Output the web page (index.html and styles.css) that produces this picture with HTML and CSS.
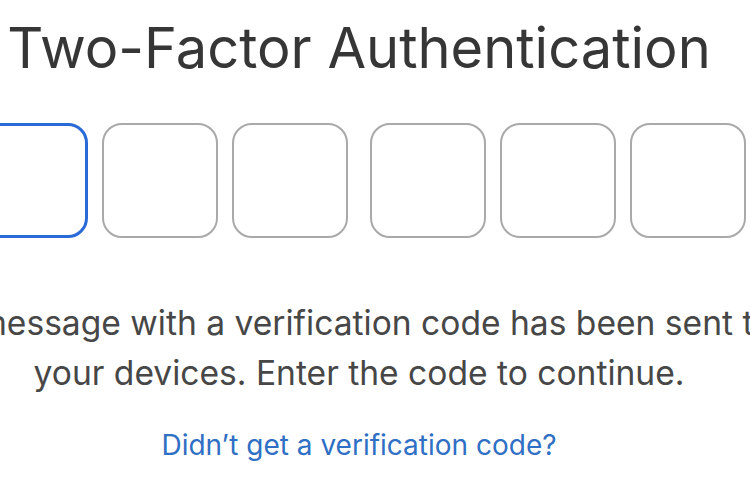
FILE: index.html
```html
<!DOCTYPE html>
<html lang="en">
<head>
<meta charset="utf-8">
<title>Two-Factor Authentication</title>
<link rel="stylesheet" href="styles.css">
</head>
<body>
<main class="auth">
  <h1 class="title">Two-Factor Authentication</h1>
  <div class="code">
    <div class="group">
      <input class="digit active" type="text" maxlength="1" aria-label="Digit 1">
      <input class="digit" type="text" maxlength="1" aria-label="Digit 2">
      <input class="digit" type="text" maxlength="1" aria-label="Digit 3">
    </div>
    <div class="group">
      <input class="digit" type="text" maxlength="1" aria-label="Digit 4">
      <input class="digit" type="text" maxlength="1" aria-label="Digit 5">
      <input class="digit" type="text" maxlength="1" aria-label="Digit 6">
    </div>
  </div>
  <p class="message">
    <span class="line">A message with a verification code has been sent to</span>
    <span class="line">your devices. Enter the code to continue.</span>
  </p>
  <a class="link" href="#">Didn’t get a verification code?</a>
</main>
</body>
</html>
```
FILE: styles.css
```css
html, body {
  margin: 0;
  padding: 0;
  background: #ffffff;
}
body {
  width: 750px;
  height: 500px;
  overflow: hidden;
  font-family: Inter, "Noto Sans", "Liberation Sans", sans-serif;
}
.auth {
  width: 718px;
  padding-top: 15px;
  display: flex;
  flex-direction: column;
  align-items: center;
}
.title {
  margin: 0;
  font-size: 56px;
  line-height: 66px;
  font-weight: 400;
  color: #363636;
  white-space: nowrap;
}
.code {
  margin-top: 42px;
  display: flex;
  gap: 22px;
}
.group {
  display: flex;
  gap: 14px;
}
.digit {
  appearance: none;
  width: 116px;
  height: 115px;
  box-sizing: border-box;
  margin: 0;
  padding: 0;
  border: 2px solid #a9a9a9;
  border-radius: 20px;
  background: #ffffff;
  outline: none;
  flex: none;
}
.digit.active {
  border: 3px solid #2a6ad6;
}
.message {
  margin: 60px 0 0;
  display: flex;
  flex-direction: column;
  align-items: center;
  font-size: 33.6px;
  line-height: 50px;
  color: #474747;
}
.line {
  white-space: nowrap;
}
.link {
  margin-top: 30px;
  font-size: 28px;
  line-height: 34px;
  color: #2f6fc4;
  text-decoration: none;
  white-space: nowrap;
}
```
